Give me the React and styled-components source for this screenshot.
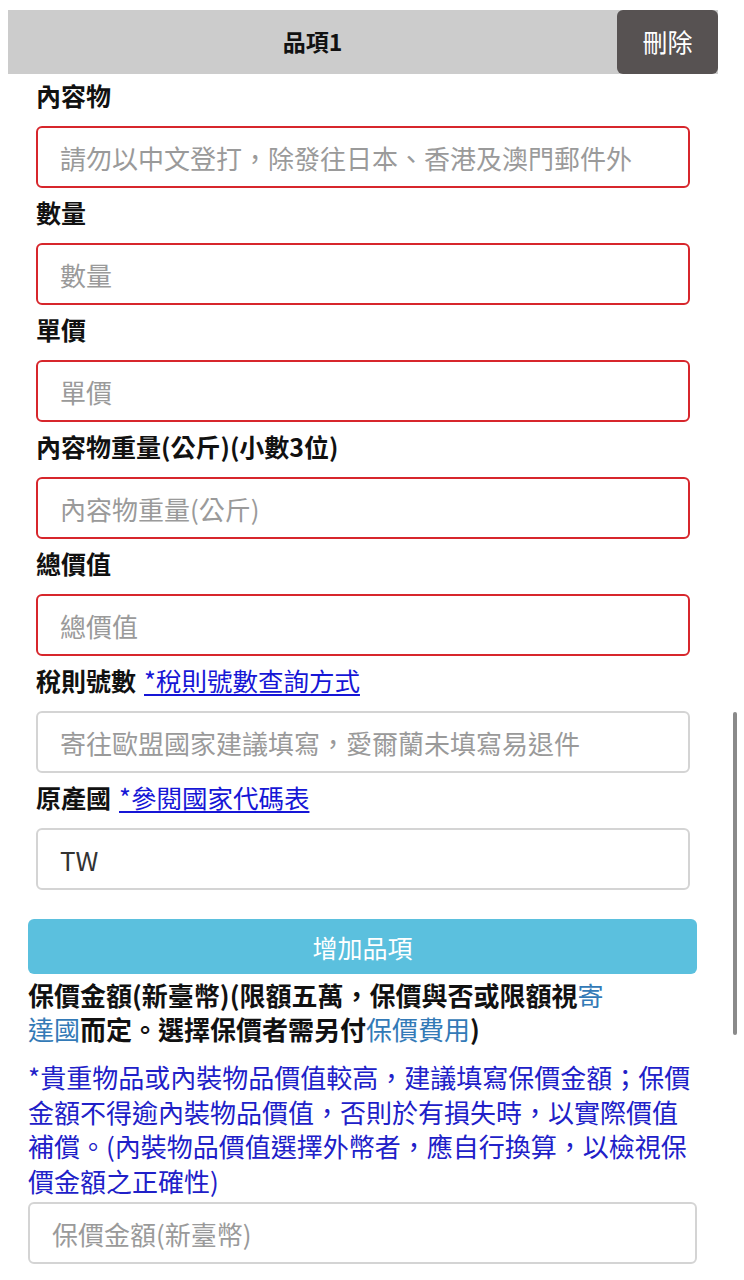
import React from 'react';
import styled, { createGlobalStyle } from 'styled-components';

const GlobalStyle = createGlobalStyle`
  html, body {
    margin: 0;
    padding: 0;
    background: #fff;
  }
  body {
    font-family: "Noto Sans CJK TC", "Noto Sans", sans-serif;
    color: #111;
  }
`;

const Page = styled.div`
  width: 744px;
  padding: 10px 26px 16px 8px;
  box-sizing: border-box;
`;

const ItemHeader = styled.div`
  display: flex;
  align-items: stretch;
  height: 64px;
  background: #cccccc;
`;

const ItemTitle = styled.div`
  flex: 1;
  display: flex;
  align-items: center;
  justify-content: center;
  padding-bottom: 3px;
  font-size: 23px;
  font-weight: 700;
  color: #111;
`;

const DeleteBtn = styled.button`
  width: 101px;
  border: none;
  border-radius: 6px;
  background: #575252;
  color: #fff;
  font-family: inherit;
  font-size: 25px;
  padding: 0 0 3px;
  cursor: pointer;
`;

const ItemBody = styled.div`
  padding: 0 28px;
`;

const Label = styled.div`
  margin-top: ${(p) => (p.$first ? '3px' : '6px')};
  line-height: 36px;
  font-size: 25px;
  font-weight: 700;
  color: #111;
  white-space: nowrap;
`;

const Link = styled.a`
  margin-left: 8px;
  font-size: 25.5px;
  font-weight: 400;
  color: #1616d6;
  text-decoration: underline;
  text-underline-offset: 3px;
`;

const Input = styled.input`
  display: block;
  width: 100%;
  box-sizing: border-box;
  height: 62px;
  margin-top: ${(p) => (p.$tight ? '4px' : '13px')};
  padding: 0 22px;
  border: 2px solid ${(p) => (p.$invalid ? '#d7262c' : '#d4d4d4')};
  border-radius: 6px;
  background: #fff;
  font-family: inherit;
  font-size: 26px;
  color: #333;
  outline: none;
  &::placeholder {
    color: #9a9a9a;
  }
`;

const Lower = styled.div`
  padding: 29px 21px 0 20px;
`;

const AddBtn = styled.button`
  display: block;
  width: 100%;
  height: 55px;
  border: none;
  border-radius: 6px;
  background: #5bc0de;
  color: #fff;
  font-family: inherit;
  font-size: 25px;
  cursor: pointer;
`;

const InsureLabel = styled.div`
  max-width: 582px;
  margin-top: 4px;
  line-height: 34px;
  font-size: 26px;
  font-weight: 700;
  color: #111;
`;

const Accent = styled.span`
  color: #337ab7;
  font-weight: 400;
`;

const Note = styled.p`
  margin: 14px 0 0;
  line-height: 34.5px;
  font-size: 26px;
  color: #2020c8;
`;

const ScrollThumb = styled.div`
  position: fixed;
  left: 733px;
  top: 712px;
  width: 4px;
  height: 323px;
  border-radius: 2px;
  background: #8a8a8a;
`;

const fields = [
  { label: '內容物', placeholder: '請勿以中文登打，除發往日本、香港及澳門郵件外', invalid: true },
  { label: '數量', placeholder: '數量', invalid: true },
  { label: '單價', placeholder: '單價', invalid: true },
  { label: '內容物重量(公斤)(小數3位)', placeholder: '內容物重量(公斤)', invalid: true },
  { label: '總價值', placeholder: '總價值', invalid: true },
  { label: '稅則號數', link: '*稅則號數查詢方式', placeholder: '寄往歐盟國家建議填寫，愛爾蘭未填寫易退件' },
  { label: '原產國', link: '*參閱國家代碼表', value: 'TW' },
];

export default function App() {
  return (
    <Page>
      <GlobalStyle />
      <ItemHeader>
        <ItemTitle>品項1</ItemTitle>
        <DeleteBtn type="button">刪除</DeleteBtn>
      </ItemHeader>
      <ItemBody>
        {fields.map((f, i) => (
          <React.Fragment key={f.label}>
            <Label $first={i === 0}>
              {f.label}
              {f.link && <Link href="#">{f.link}</Link>}
            </Label>
            <Input
              $invalid={f.invalid}
              placeholder={f.placeholder}
              defaultValue={f.value}
            />
          </React.Fragment>
        ))}
      </ItemBody>
      <Lower>
        <AddBtn type="button">增加品項</AddBtn>
        <InsureLabel>
          保價金額(新臺幣)(限額五萬，保價與否或限額視<Accent>寄達國</Accent>而定。選擇保價者需另付<Accent>保價費用</Accent>)
        </InsureLabel>
        <Note>
          *貴重物品或內裝物品價值較高，建議填寫保價金額；保價金額不得逾內裝物品價值，否則於有損失時，以實際價值補償。(內裝物品價值選擇外幣者，應自行換算，以檢視保價金額之正確性)
        </Note>
        <Input $tight placeholder="保價金額(新臺幣)" />
      </Lower>
      <ScrollThumb />
    </Page>
  );
}
